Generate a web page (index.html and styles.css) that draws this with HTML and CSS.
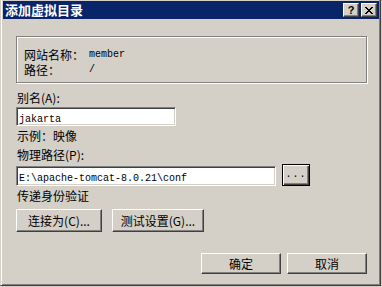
FILE: index.html
```html
<!DOCTYPE html>
<html>
  <head>
    <meta charset="utf-8" />
    <link rel="stylesheet" href="styles.css">
  </head>
  <body>
    <div class="window">
      <div class="titlebar">
        <span class="title">添加虚拟目录</span>
        <div class="caption-buttons">
          <span class="cap-btn help">?</span>
          <span class="cap-btn close">
            <svg width="8" height="7" viewBox="0 0 8 7">
              <path d="M0 0h2v1h-2zM6 0h2v1h-2zM1 1h2v1h-2zM5 1h2v1h-2zM2 2h4v1h-4zM3 3h2v1h-2zM2 4h4v1h-4zM1 5h2v1h-2zM5 5h2v1h-2zM0 6h2v1h-2zM6 6h2v1h-2z" fill="#000"/>
            </svg>
          </span>
        </div>
      </div>

      <div class="content">
        <div class="groupbox">
          <div class="info-row"><span class="info-label">网站名称：</span><span class="mono">member</span></div>
          <div class="info-row"><span class="info-label">路径：</span><span class="mono">/</span></div>
        </div>

        <div class="label alias-label">别名(A):</div>
        <div class="textbox alias-box"><span class="mono">jakarta</span></div>
        <div class="label sample">示例：映像</div>

        <div class="label path-label">物理路径(P):</div>
        <div class="path-row">
          <div class="textbox path-box"><span class="mono">E:\apache-tomcat-8.0.21\conf</span></div>
          <button class="btn default browse">...</button>
        </div>

        <div class="label auth">传递身份验证</div>
        <div class="auth-row">
          <button class="btn connect">连接为(C)...</button>
          <button class="btn test">测试设置(G)...</button>
        </div>

        <div class="dialog-buttons">
          <button class="btn ok">确定</button>
          <button class="btn ok">取消</button>
        </div>
      </div>
    </div>
  </body>
</html>
```

FILE: styles.css
```css
html,
body {
  margin: 0;
  background: #d4d0c8;
  font-family: "Noto Sans CJK SC", "Liberation Sans", sans-serif;
  font-size: 12px;
  color: #000;
}
.window {
  width: 381px;
  height: 286px;
  box-sizing: border-box;
  background: #d4d0c8;
  border-left: 1px solid #d4d0c8;
  border-right: 1px solid #404040;
  border-bottom: 1px solid #404040;
  box-shadow: inset 1px 0 #fff, inset -1px -1px #808080;
  padding: 1px 1px 0 2px;
}
.titlebar {
  height: 18px;
  background: #0a246a;
  display: flex;
  align-items: center;
  justify-content: space-between;
  padding: 0 2px 0 2px;
}
.title {
  color: #fff;
  font-weight: bold;
  font-size: 13px;
  line-height: 18px;
}
.caption-buttons {
  display: flex;
  gap: 2px;
}
.cap-btn {
  width: 16px;
  height: 14px;
  box-sizing: border-box;
  background: #d4d0c8;
  border: 1px solid;
  border-color: #fff #404040 #404040 #fff;
  box-shadow: inset -1px -1px #808080;
  display: flex;
  align-items: center;
  justify-content: center;
}
.help {
  font-family: "Liberation Sans", sans-serif;
  font-weight: bold;
  font-size: 11px;
  line-height: 12px;
}
.content {
  padding: 17px 12px 0 13px;
}
.groupbox {
  border: 1px solid #808080;
  box-shadow: inset 1px 1px #fff, 1px 1px #fff;
  padding: 10px 7px 5px 7px;
}
.info-row {
  display: grid;
  grid-template-columns: 65px auto;
  align-items: center;
  line-height: 15px;
  height: 15px;
}
.mono {
  font-family: "Liberation Mono", "DejaVu Sans Mono", monospace;
  font-size: 10px;
}
.label {
  line-height: 14px;
  padding-left: 1px;
}
.alias-label {
  margin-top: 8px;
}
.textbox {
  height: 19px;
  box-sizing: border-box;
  background: #fff;
  border: 1px solid;
  border-color: #808080 #fff #fff #808080;
  box-shadow: inset 1px 1px #404040, inset -1px -1px #d4d0c8;
  padding: 0 2px;
  line-height: 17px;
}
.alias-box {
  width: 160px;
  margin-top: 2px;
}
.sample {
  margin-top: 3px;
}
.path-label {
  margin-top: 5px;
}
.path-row {
  display: flex;
  align-items: flex-end;
  gap: 6px;
  margin-top: 2px;
}
.path-box {
  width: 260px;
  height: 20px;
  line-height: 18px;
}
.btn {
  font-family: "Noto Sans CJK SC", sans-serif;
  font-size: 12px;
  color: #000;
  background: #d4d0c8;
  border: 1px solid;
  border-color: #fff #404040 #404040 #fff;
  box-shadow: inset -1px -1px #808080;
  padding: 0;
  margin: 0;
  box-sizing: border-box;
  line-height: 14px;
}
.btn.default {
  border: 1px solid #000;
  box-shadow: inset 1px 1px #fff, inset -1px -1px #404040, inset -2px -2px #808080;
}
.browse {
  width: 28px;
  height: 22px;
  font-family: "Liberation Mono", monospace;
  font-size: 10px;
  letter-spacing: 1px;
}
.auth {
  margin-top: 3px;
}
.auth-row {
  display: flex;
  gap: 10px;
  margin-top: 6px;
}
.connect {
  width: 86px;
  height: 23px;
}
.test {
  width: 92px;
  height: 23px;
}
.dialog-buttons {
  display: flex;
  justify-content: flex-end;
  gap: 6px;
  margin-top: 21px;
}
.ok {
  width: 80px;
  height: 21px;
}
```
